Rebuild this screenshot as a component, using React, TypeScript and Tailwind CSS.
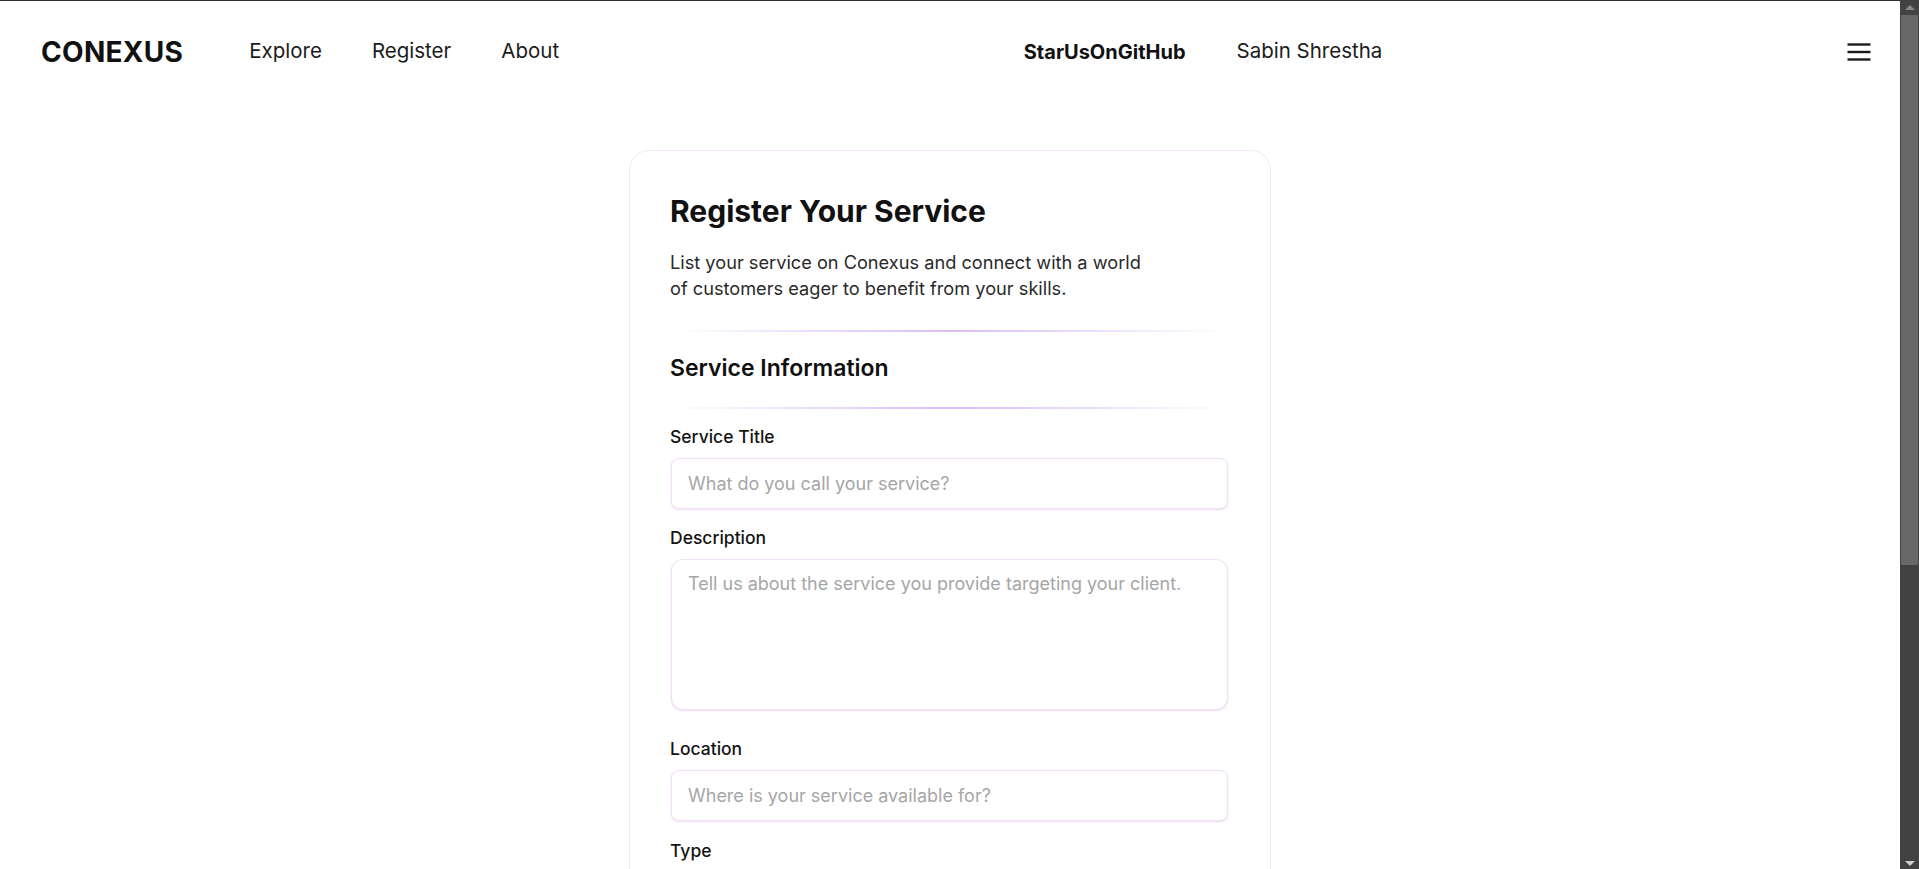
import React from 'react';

// Navegação principal
const NAV_LINKS = ['Explore', 'Register', 'About'];

function Hamburger() {
  return (
    <svg width="24" height="18" viewBox="0 0 24 18" fill="none">
      <line x1="0.5" y1="1.5" x2="23.5" y2="1.5" stroke="#1a1a1a" strokeWidth="2.4" />
      <line x1="0.5" y1="9" x2="23.5" y2="9" stroke="#1a1a1a" strokeWidth="2.4" />
      <line x1="0.5" y1="16.5" x2="23.5" y2="16.5" stroke="#1a1a1a" strokeWidth="2.4" />
    </svg>
  );
}

function Divider() {
  return <div className="h-[2px] w-full bg-gradient-to-r from-transparent via-[#d9bdf6] to-transparent" />;
}

function Field({ label, children, className = '' }: { label: string; children: React.ReactNode; className?: string }) {
  return (
    <div className={className}>
      <label className="block text-[17.5px] font-medium leading-6 text-[#141414]">{label}</label>
      <div className="mt-[9px] ml-[1px] mr-[2px]">{children}</div>
    </div>
  );
}

const inputCls =
  'block w-full rounded-lg border border-[#f1e0f5] bg-white px-4 text-[18px] text-[#222] placeholder:text-[#a6a6a6] shadow-[0_1px_2px_rgba(200,150,225,0.35)] outline-none';

export default function App() {
  return (
    <div className="flex h-[869px] w-full overflow-hidden bg-white font-['Inter',sans-serif] text-[#111]">
      <div className="flex min-w-0 flex-1 flex-col">
        <div className="h-px w-full shrink-0 bg-[#2e2e2e]" />

        {/* CABEÇALHO */}
        <header className="flex h-[101px] shrink-0 items-center justify-between pl-[41px] pr-[29px]">
          <div className="flex items-center">
            <span className="text-[28px] font-bold tracking-[0.3px] text-[#111]">CONEXUS</span>
            <nav className="ml-[66px] flex items-center gap-[50px]">
              {NAV_LINKS.map((l) => (
                <a key={l} className="text-[20.5px] text-[#1c1c1c]">
                  {l}
                </a>
              ))}
            </nav>
          </div>
          <div className="flex items-center gap-[51px]">
            <span className="text-[20px] font-bold text-[#111]">StarUsOnGitHub</span>
            <span className="text-[20.5px] text-[#1c1c1c]">Sabin Shrestha</span>
          </div>
          <button className="flex items-center">
            <Hamburger />
          </button>
        </header>

        {/* FORMULÁRIO */}
        <main className="flex shrink-0 justify-center pt-[48px]">
          <div className="w-[642px] rounded-[20px] border border-[#f4e6f7] bg-white px-10 pb-10 pt-[42px]">
            <h1 className="text-[30px] font-bold leading-9 text-[#111]">Register Your Service</h1>
            <p className="mt-5 text-[18.2px] leading-[26px] text-[#2a2a2a]">
              List your service on Conexus and connect with a world
              <br />
              of customers eager to benefit from your skills.
            </p>

            <div className="mt-[29px]">
              <Divider />
            </div>
            <h2 className="mt-[22px] text-[23px] font-semibold leading-7 text-[#111]">Service Information</h2>
            <div className="mt-[25px]">
              <Divider />
            </div>

            <Field label="Service Title" className="mt-4">
              <input className={`${inputCls} h-[51px]`} placeholder="What do you call your service?" />
            </Field>

            <Field label="Description" className="mt-[17px]">
              <textarea
                className={`${inputCls} h-[151px] resize-none rounded-xl py-[10px]`}
                placeholder="Tell us about the service you provide targeting your client."
              />
            </Field>

            <Field label="Location" className="mt-[27px]">
              <input className={`${inputCls} h-[51px]`} placeholder="Where is your service available for?" />
            </Field>

            <Field label="Type" className="mt-[18px]">
              <select className={`${inputCls} h-[51px]`}>
                <option>Select a type</option>
              </select>
            </Field>
          </div>
        </main>
      </div>

      {/* barra de rolagem */}
      <div className="flex h-full w-[19px] shrink-0 flex-col bg-[#424242]">
        <div className="flex h-[15px] items-center justify-center">
          <div className="h-0 w-0 border-x-[5px] border-b-[5px] border-x-transparent border-b-[#8a8a8a]" />
        </div>
        <div className="mx-[1px] h-[550px] bg-[#686868]" />
        <div className="flex-1" />
        <div className="flex h-[12px] items-center justify-center">
          <div className="h-0 w-0 border-x-[5px] border-t-[5px] border-x-transparent border-t-[#d0d0d0]" />
        </div>
      </div>
    </div>
  );
}
